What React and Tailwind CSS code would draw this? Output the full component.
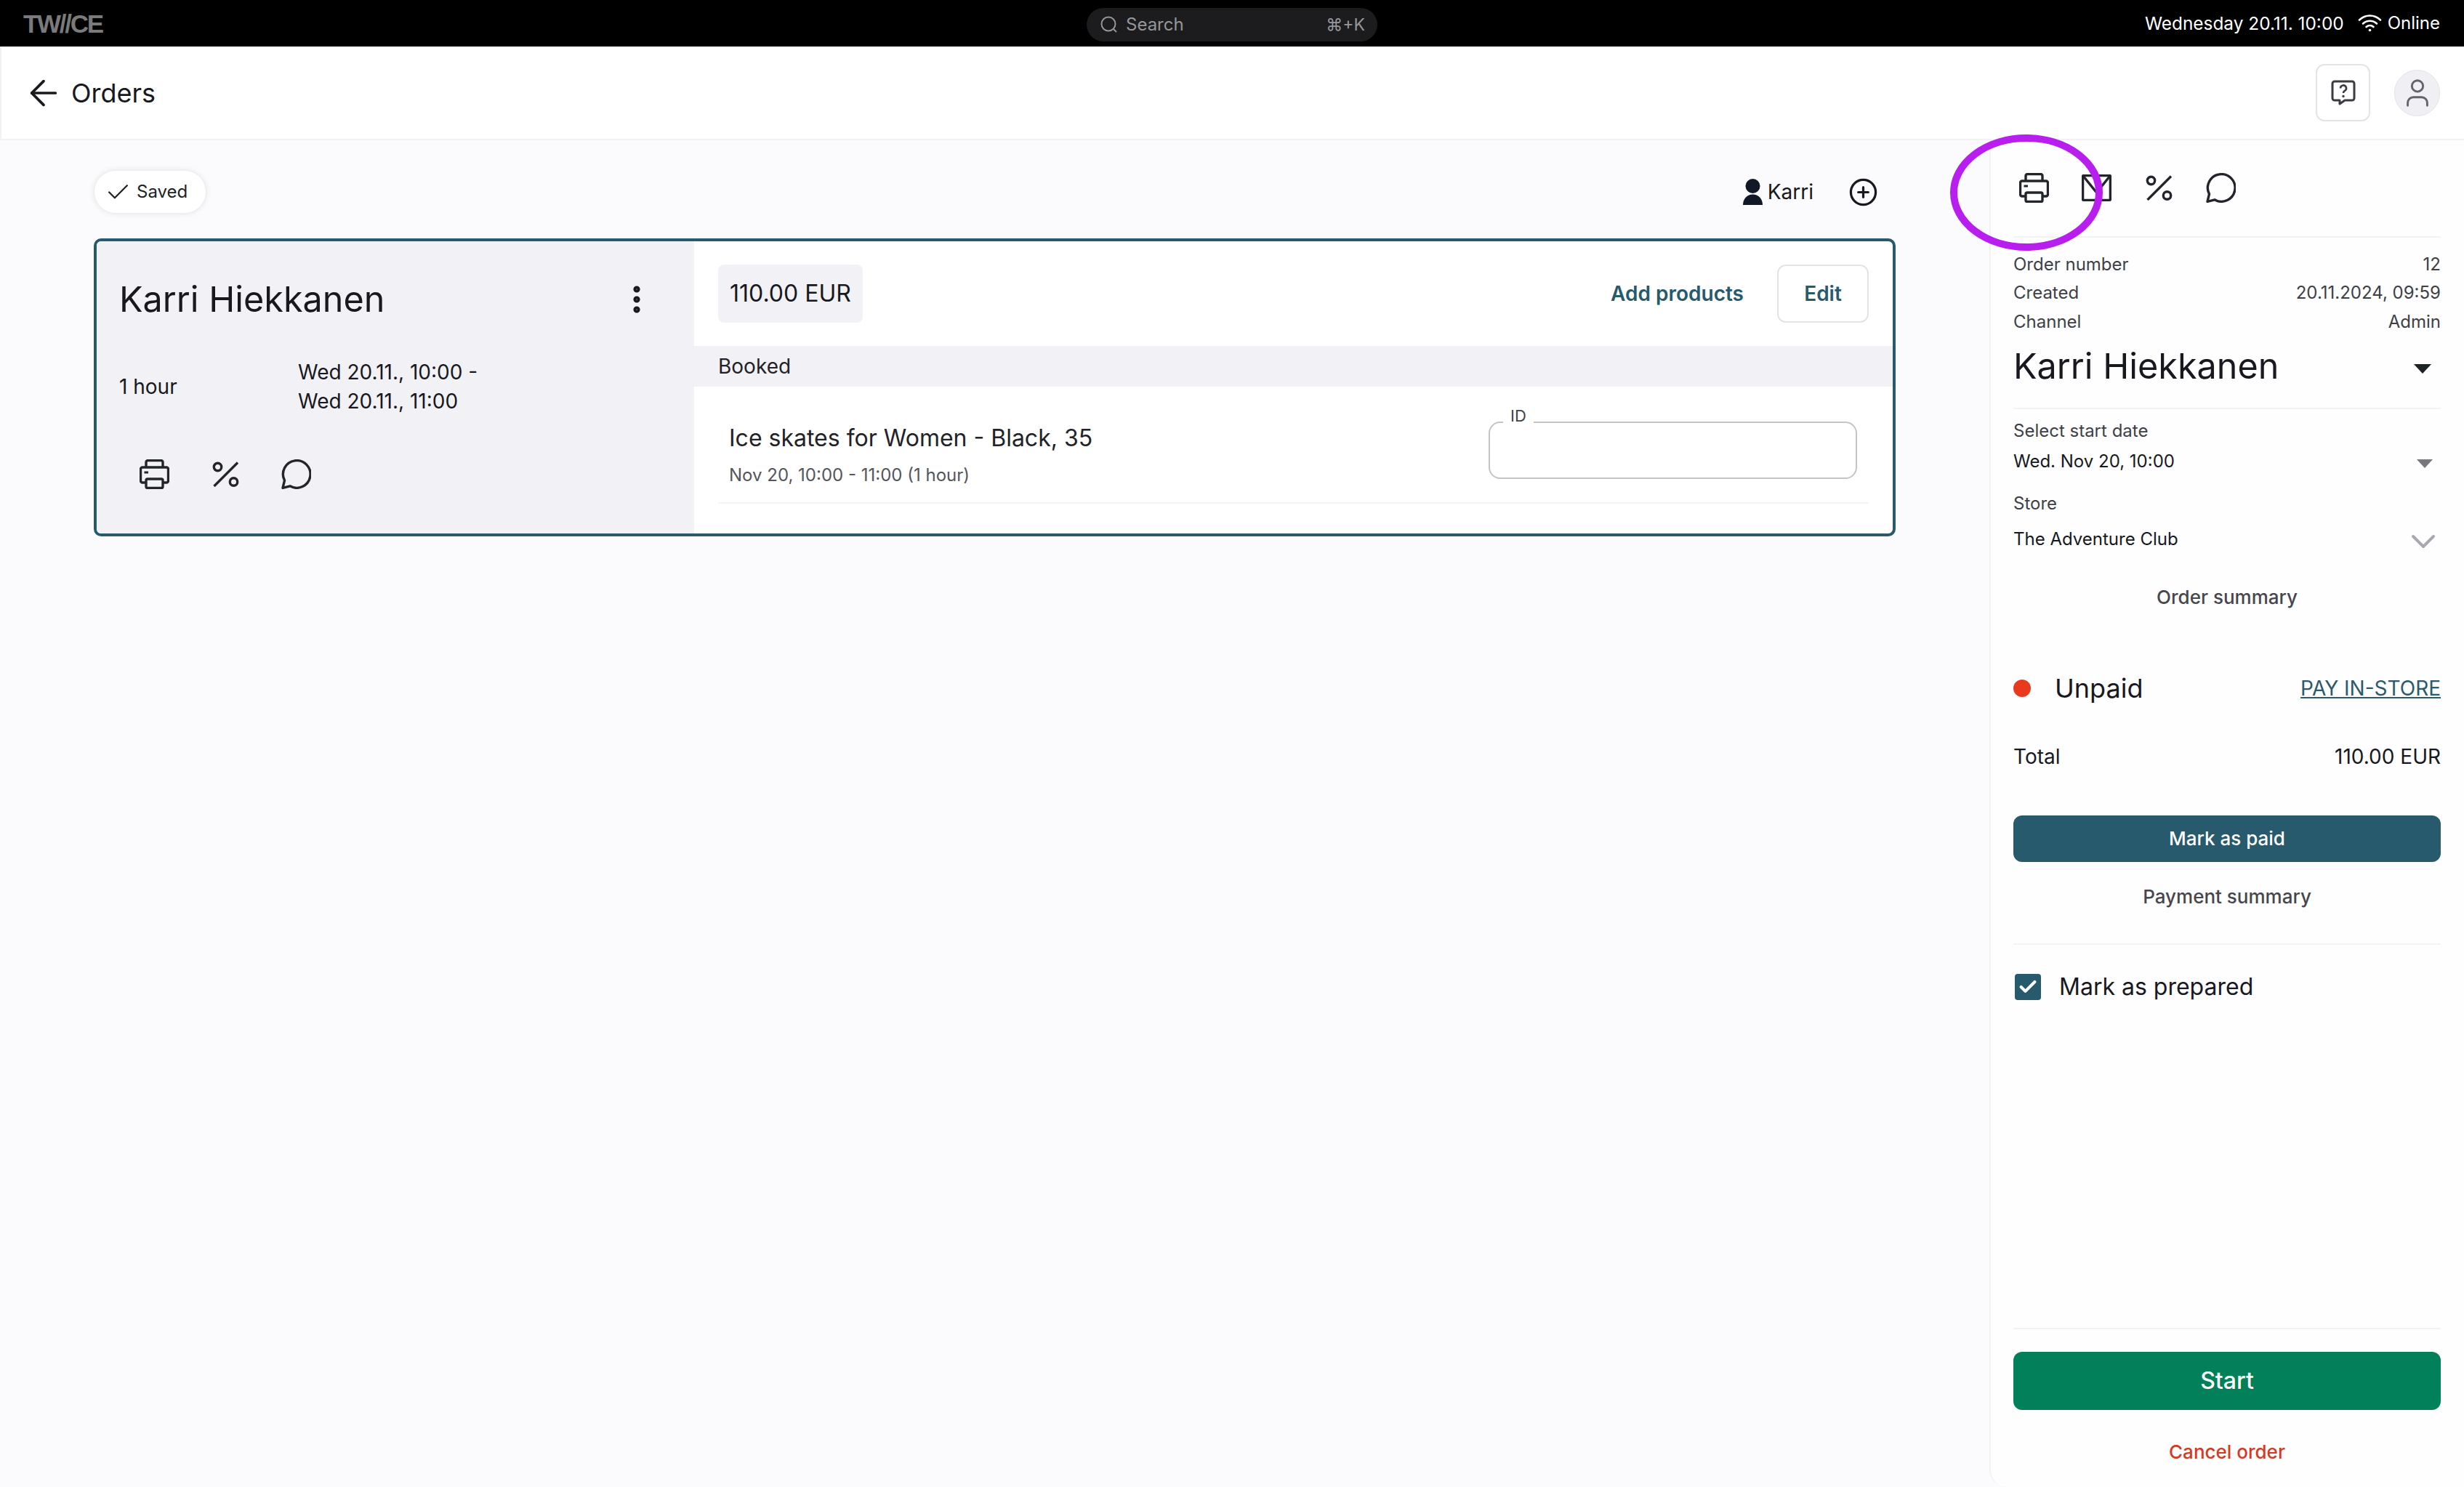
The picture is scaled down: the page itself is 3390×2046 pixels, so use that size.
import { ArrowLeft, Check, CirclePlus, User, ChevronDown, MoreVertical } from 'lucide-react';

// ─── Icons drawn to match the screenshot ────────────────────────────────────

function PrinterIcon({ className }) {
  return (
    <svg viewBox="0 0 41 41" fill="none" stroke="currentColor" strokeWidth="3.400" strokeLinejoin="round" className={className}>
      <path d="M9 11V4a2.500 2.500 0 0 1 2.500-2.500h18A2.500 2.500 0 0 1 32 4v7" />
      <path d="M9 32H4a2.500 2.500 0 0 1-2.500-2.500v-16A2.500 2.500 0 0 1 4 11h33a2.500 2.500 0 0 1 2.500 2.500v16A2.500 2.500 0 0 1 37 32h-5" />
      <rect x="9" y="27" width="23" height="12.500" rx="2" />
      <rect x="6.500" y="16.500" width="5.500" height="3" fill="currentColor" stroke="none" />
    </svg>
  );
}

function MailIcon({ className }) {
  return (
    <svg viewBox="0 0 41 37" fill="none" stroke="currentColor" strokeWidth="3.400" strokeLinejoin="round" className={className}>
      <rect x="1.600" y="1.600" width="37.800" height="33.800" rx="1" />
      <path d="M2 2l18.500 23L39 2" />
    </svg>
  );
}

function PercentIcon({ className }) {
  return (
    <svg viewBox="0 0 37 35" fill="none" stroke="currentColor" strokeWidth="3.400" className={className}>
      <path d="M35 1.500L2.500 34" />
      <circle cx="7.500" cy="7.500" r="5.200" />
      <circle cx="29.500" cy="28" r="5.200" />
    </svg>
  );
}

function ChatIcon({ className }) {
  return (
    <svg viewBox="0 0 41 41" fill="none" stroke="currentColor" strokeWidth="3.400" strokeLinejoin="round" className={className}>
      <path d="M2 39.300L4.500 29A18.800 18.800 0 1 1 12 36.800z" />
    </svg>
  );
}

function HelpIcon({ className }) {
  return (
    <svg viewBox="0 0 34 35" fill="none" stroke="currentColor" strokeWidth="3" className={className}>
      <path d="M5 2h24a3 3 0 0 1 3 3v20a3 3 0 0 1-3 3H19l-7 5v-5H5a3 3 0 0 1-3-3V5a3 3 0 0 1 3-3z" strokeLinejoin="round" />
      <path d="M13 11.500a4 4 0 1 1 6 3.400c-1.300.8-2 1.500-2 3" strokeWidth="2.600" />
      <circle cx="17" cy="22.500" r="1.700" fill="currentColor" stroke="none" />
    </svg>
  );
}

function WifiIcon({ className }) {
  return (
    <svg viewBox="0 0 33 25" fill="none" stroke="currentColor" strokeWidth="2.600" strokeLinecap="round" className={className}>
      <path d="M2 8.500c8.500-8 20.500-8 29 0" />
      <path d="M7 13.500c5.500-5 13.500-5 19 0" />
      <path d="M11.500 18c3-2.600 7-2.600 10 0" />
      <circle cx="16.500" cy="22.500" r="1.800" fill="currentColor" stroke="none" />
    </svg>
  );
}

function SearchIcon({ className }) {
  return (
    <svg viewBox="0 0 24 24" fill="none" stroke="currentColor" strokeWidth="2" className={className}>
      <circle cx="11" cy="11" r="9.500" />
      <path d="M18 18l4 4" />
    </svg>
  );
}

function PersonIcon({ className }) {
  return (
    <svg viewBox="0 0 27 36" fill="currentColor" className={className}>
      <circle cx="13.500" cy="10" r="10" />
      <path d="M0 36C0 27 6 21.500 13.500 21.500S27 27 27 36z" />
    </svg>
  );
}

function Caret({ className }) {
  return (
    <svg viewBox="0 0 26 14" fill="currentColor" className={className}>
      <path d="M0 0h26L13 14z" />
    </svg>
  );
}

// ─── Top bars ───────────────────────────────────────────────────────────────

function TopBar() {
  return (
    <div className="relative h-16 shrink-0 bg-black flex items-center justify-between pl-8 pr-[33px]">
      <span className="w-[111px] whitespace-nowrap text-[35px] leading-none font-bold tracking-[-2.300px] text-[#7a7a7a] font-['Liberation_Sans',sans-serif]">TW//CE</span>
      <div className="absolute left-1/2 -translate-x-1/2 top-[11px] w-[400px] h-[46px] rounded-full bg-[#1c1c1e] flex items-center justify-between pl-[19px] pr-[17px] text-[#96969a] text-[24px]">
        <div className="flex items-center gap-[11px]">
          <SearchIcon className="w-[24px] h-[24px]" />
          <span>Search</span>
        </div>
        <span className="text-[23px]">⌘+K</span>
      </div>
      <div className="flex items-center text-white text-[24px]">
        <span className="text-[24.400px]">Wednesday 20.11. 10:00</span>
        <WifiIcon className="w-[33px] h-[25px] ml-[19px] mr-[8px]" />
        <span>Online</span>
      </div>
    </div>
  );
}

function Header() {
  return (
    <div className="h-[129px] shrink-0 bg-white border-b-2 border-l-2 border-[#f2f1f5] flex items-center justify-between pl-[30px] pr-[33px]">
      <div className="flex items-center gap-[10px] text-[#18181f]">
        <ArrowLeft className="w-[56px] h-[56px]" strokeWidth={1.600} />
        <span className="text-[36px]">Orders</span>
      </div>
      <div className="flex items-center gap-[33px]">
        <div className="w-[75px] h-[79px] rounded-xl border-2 border-[#e4e3e7] flex items-center justify-center text-[#3b3b42]">
          <HelpIcon className="w-[34px] h-[35px]" />
        </div>
        <div className="w-[63px] h-[64px] rounded-full bg-[#f0eff3] border border-[#e4e3e7] flex items-center justify-center text-[#63636e]">
          <User className="w-[46px] h-[46px]" strokeWidth={1.500} />
        </div>
      </div>
    </div>
  );
}

// ─── Order card ─────────────────────────────────────────────────────────────

function OrderCard() {
  return (
    <div className="flex h-[410px] rounded-[10px] border-4 border-[#265a6c] bg-white overflow-hidden">
      <div className="w-[822px] shrink-0 bg-[#f2f1f5] pl-[31px] pr-[55px] pt-[50px]">
        <div className="flex items-center justify-between">
          <span className="text-[48.500px] leading-[60px] text-[#18181f]">Karri Hiekkanen</span>
          <MoreVertical className="w-[48px] h-[48px] text-[#18181f]" strokeWidth={2.600} />
        </div>
        <div className="flex items-center mt-[50px] text-[28px] leading-[40px] text-[#18181f]">
          <span className="w-[246px]">1 hour</span>
          <div>
            <div>Wed 20.11., 10:00 -</div>
            <div>Wed 20.11., 11:00</div>
          </div>
        </div>
        <div className="flex items-center mt-[60px] pl-[28px] text-[#22262a]">
          <PrinterIcon className="w-[41px] h-[41px]" />
          <PercentIcon className="w-[37px] h-[35px] ml-[59px]" />
          <ChatIcon className="w-[41px] h-[41px] ml-[58px]" />
        </div>
      </div>
      <div className="flex-1 min-w-0">
        <div className="h-[144px] flex items-center justify-between pl-[33px] pr-[33px]">
          <div className="w-[199px] h-[80px] pl-[16px] rounded-lg bg-[#f2f1f5] flex items-center text-[32px] text-[#18181f]">110.00 EUR</div>
          <div className="flex items-center gap-[46px]">
            <span className="text-[28px] font-semibold text-[#265a6c]">Add products</span>
            <div className="w-[126px] h-[80px] rounded-xl border-2 border-[#e4e3e7] flex items-center justify-center text-[28px] font-semibold text-[#265a6c]">Edit</div>
          </div>
        </div>
        <div className="h-[56px] bg-[#f2f1f5] flex items-center pl-[33px] text-[28px] text-[#222228]">Booked</div>
        <div className="mx-[33px] h-[161px] border-b-2 border-[#f4f3f6] pl-[15px] pr-[16px] pt-[49px] flex items-start justify-between">
          <div>
            <div className="text-[32px] leading-[44px] text-[#222228]">Ice skates for Women - Black, 35</div>
            <div className="text-[24px] leading-[32px] mt-[13px] text-[#55555d]">Nov 20, 10:00 - 11:00 (1 hour)</div>
          </div>
          <div className="relative w-[507px] h-[79px] -mt-[1px] rounded-2xl border-2 border-[#c4c3c7]">
            <span className="absolute left-[18px] -top-[23px] px-[10px] bg-white text-[22px] leading-[26px] text-[#3f3f46]">ID</span>
          </div>
        </div>
      </div>
    </div>
  );
}

// ─── Side panel ─────────────────────────────────────────────────────────────

function InfoRow({ label, value }) {
  return (
    <div className="flex justify-between h-[39.500px] items-center text-[24px] text-[#3f3f46]">
      <span>{label}</span>
      <span>{value}</span>
    </div>
  );
}

function SidePanel() {
  return (
    <aside className="relative w-[653px] shrink-0 bg-[#fefdff] border-l-2 border-[#f3f2f5] rounded-bl-3xl pl-[31px] pr-[32px] flex flex-col">
      <div className="relative h-[134px] border-b-2 border-[#f3f2f5] pl-[8px] pt-[45px] flex items-start text-[#22262a]">
        <PrinterIcon className="w-[41px] h-[41px]" />
        <MailIcon className="w-[41px] h-[37px] mt-[2px] ml-[45px]" />
        <PercentIcon className="w-[37px] h-[35px] mt-[3px] ml-[47px]" />
        <ChatIcon className="w-[41px] h-[41px] ml-[46px]" />
      </div>
      <div className="pt-[17px]">
        <InfoRow label="Order number" value="12" />
        <InfoRow label="Created" value="20.11.2024, 09:59" />
        <InfoRow label="Channel" value="Admin" />
      </div>
      <div className="h-[100px] border-b-2 border-[#f3f2f5] flex items-start justify-between pt-[11px] pr-[12px]">
        <span className="text-[48.500px] leading-[60px] text-[#18181f]">Karri Hiekkanen</span>
        <Caret className="w-[26px] h-[13px] mt-[27px] text-[#1c2226]" />
      </div>
      <div className="text-[24px] leading-[32px] text-[#3f3f46] mt-[14px]">Select start date</div>
      <div className="flex items-center justify-between pr-[11px] mt-[10px] h-[32px] text-[24px] text-[#18181f]">
        <span>Wed. Nov 20, 10:00</span>
        <Caret className="w-[22px] h-[12px] mt-[6px] text-[#77777c]" />
      </div>
      <div className="text-[24px] leading-[32px] text-[#3f3f46] mt-[26px]">Store</div>
      <div className="flex items-center justify-between -mr-[4px] mt-[17px] h-[32px] text-[24px] text-[#18181f]">
        <span>The Adventure Club</span>
        <ChevronDown className="w-[56px] h-[56px] mt-[6px] text-[#a9a8b0]" strokeWidth={1.700} />
      </div>
      <div className="text-center text-[26px] leading-[32px] font-medium text-[#47464c] mt-[48px]">Order summary</div>

      <div className="flex items-center justify-between mt-[85px] h-[48px]">
        <div className="flex items-center gap-[33px]">
          <span className="w-[24px] h-[24px] rounded-full bg-[#ea3a1e]" />
          <span className="text-[36px] text-[#18181f]">Unpaid</span>
        </div>
        <span className="text-[28px] text-[#2a5a6b] underline">PAY IN-STORE</span>
      </div>
      <div className="flex justify-between mt-[50px] h-[40px] items-center text-[28px] text-[#18181f]">
        <span>Total</span>
        <span>110.00 EUR</span>
      </div>
      <div className="mt-[61px] h-[64px] shrink-0 rounded-xl bg-[#265a6c] flex items-center justify-center text-[26px] font-medium text-white">Mark as paid</div>
      <div className="text-center text-[26px] leading-[32px] font-medium text-[#47464c] mt-[32px]">Payment summary</div>
      <div className="border-b-2 border-[#f3f2f5] mt-[48px]" />
      <div className="flex items-center gap-[25px] mt-[34px]">
        <div className="w-[36px] h-[36px] ml-[2px] rounded bg-[#265a6c] flex items-center justify-center text-white">
          <Check className="w-[28px] h-[28px]" strokeWidth={3.500} />
        </div>
        <span className="text-[32px] text-[#18181f]">Mark as prepared</span>
      </div>

      <div className="mt-auto border-t-2 border-[#f3f2f5] pt-[31px]">
        <div className="h-[80px] rounded-xl bg-[#018059] flex items-center justify-center text-[32px] font-medium text-white">Start</div>
        <div className="h-[106px] pt-[8px] flex items-center justify-center text-[26px] font-medium text-[#d23b22]">Cancel order</div>
      </div>

      {/* highlight ring round the print icon */}
      <svg viewBox="0 0 220 170" fill="none" className="absolute -left-[61px] -top-[13px] w-[220px] h-[170px] pointer-events-none">
        <ellipse cx="110" cy="85" rx="100" ry="75" stroke="#b81fef" strokeWidth="10" />
      </svg>
    </aside>
  );
}

// ─── Page ───────────────────────────────────────────────────────────────────

export default function App() {
  return (
    <div className="w-[3390px] h-[2046px] flex flex-col overflow-hidden bg-[#fbfafd] font-['Inter',sans-serif]">
      <TopBar />
      <Header />
      <div className="flex flex-1 min-h-0">
        <main className="flex-1 min-w-0 pl-[129px] pr-[129px] pt-[42px]">
          <div className="flex items-center justify-between h-[58px] pr-[24px]">
            <div className="ml-px w-[153px] h-[58px] rounded-full bg-white shadow-[0_0_8px_rgba(0,0,0,0.12)] flex items-center gap-[7px] pl-[14px] text-[24px] text-[#222228]">
              <Check className="w-[37px] h-[37px]" strokeWidth={1.500} />
              <span>Saved</span>
            </div>
            <div className="flex items-center text-[#18181f]">
              <PersonIcon className="w-[27px] h-[36px] text-[#111827]" />
              <span className="text-[28px] ml-[7px]">Karri</span>
              <CirclePlus className="w-[41px] h-[41px] ml-[48px]" strokeWidth={1.900} />
            </div>
          </div>
          <div className="mt-[35px]">
            <OrderCard />
          </div>
        </main>
        <SidePanel />
      </div>
    </div>
  );
}
